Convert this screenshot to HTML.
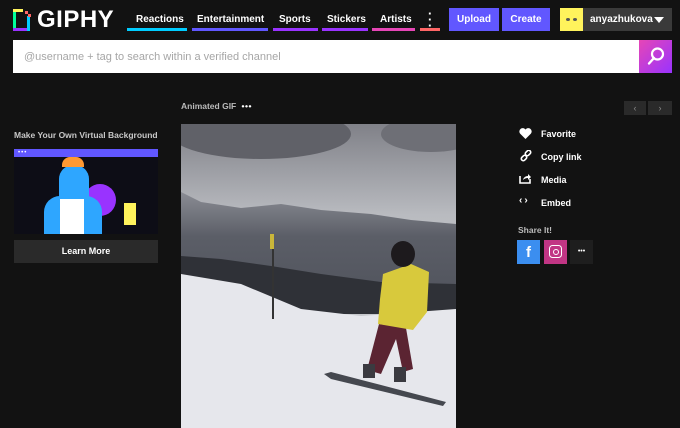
<!DOCTYPE html>
<html><head><meta charset="utf-8"><style>
*{margin:0;padding:0;box-sizing:border-box}
body{width:680px;height:428px;background:#121212;font-family:"Liberation Sans",sans-serif;color:#fff;position:relative;overflow:hidden}
.a{position:absolute}
.nav{font-size:10px;font-weight:bold;top:14px}
.ul{height:3px;top:28px}
.btn{top:8px;height:23px;background:#6157ff;font-size:10px;font-weight:bold;text-align:center;line-height:23px}
.act{left:541px;font-size:9px;font-weight:bold}
</style></head><body>
<!-- logo -->
<svg class="a" style="left:13px;top:9px" width="20" height="23" viewBox="0 0 20 23">
<rect x="0" y="2" width="3" height="19" fill="#00ff99"/><rect x="0" y="19" width="17" height="3" fill="#9933ff"/><rect x="14" y="7" width="3" height="15" fill="#00ccff"/><rect x="0" y="0" width="10" height="3" fill="#fff35c"/><rect x="12" y="2" width="3" height="3" fill="#ff6666"/><rect x="15" y="5" width="3" height="3" fill="#ff6666"/></svg>
<div class="a" style="left:37px;top:6px;font-size:24px;font-weight:bold;letter-spacing:0.5px">GIPHY</div>
<div class="a nav" style="left:136px">Reactions</div><div class="a ul" style="left:127px;width:60px;background:#00ccff"></div>
<div class="a nav" style="left:197px">Entertainment</div><div class="a ul" style="left:192px;width:76px;background:#6157ff"></div>
<div class="a nav" style="left:279px">Sports</div><div class="a ul" style="left:273px;width:45px;background:#9933ff"></div>
<div class="a nav" style="left:327px">Stickers</div><div class="a ul" style="left:322px;width:46px;background:#9933ff"></div>
<div class="a nav" style="left:380px">Artists</div><div class="a ul" style="left:372px;width:43px;background:#e646b6"></div>
<div class="a nav" style="left:428px;top:11px;font-size:13px;line-height:6px">·<br>·<br>·</div><div class="a ul" style="left:420px;width:20px;background:#ff6666"></div>
<div class="a btn" style="left:449px;width:50px">Upload</div>
<div class="a btn" style="left:502px;width:48px">Create</div>
<div class="a" style="left:560px;top:8px;width:112px;height:23px;background:#3a3a3a"></div>
<div class="a" style="left:560px;top:8px;width:23px;height:23px;background:#fff35c"></div>
<div class="a" style="left:566px;top:18px;width:4px;height:3px;background:#555;border-radius:50%"></div><div class="a" style="left:573px;top:18px;width:4px;height:3px;background:#555;border-radius:50%"></div>
<div class="a" style="left:590px;top:14px;font-size:10px;font-weight:bold">anyazhukova</div>
<div class="a" style="left:654px;top:17px;border:5px solid transparent;border-top:6px solid #fff;border-bottom:0"></div>
<!-- search -->
<div class="a" style="left:13px;top:40px;width:626px;height:33px;background:#fff"></div>
<div class="a" style="left:24px;top:51px;font-size:11px;color:#a6a6a6">@username + tag to search within a verified channel</div>
<div class="a" style="left:639px;top:40px;width:33px;height:33px;background:linear-gradient(135deg,#e646b6,#9933ff)"></div>
<svg class="a" style="left:645px;top:45px" width="22" height="22" viewBox="0 0 22 22"><circle cx="12.5" cy="9" r="5.5" fill="none" stroke="#fff" stroke-width="2.2"/><line x1="9" y1="13" x2="4" y2="18.5" stroke="#fff" stroke-width="2.4" stroke-linecap="round"/></svg>
<!-- left -->
<div class="a" style="left:14px;top:130px;font-size:8.5px;font-weight:bold;color:#c8c8c8">Make Your Own Virtual Background</div>
<div class="a" style="left:14px;top:149px;width:144px;height:85px;background:#0d0d16;overflow:hidden">
<div class="a" style="left:0;top:0;width:144px;height:8px;background:#6157ff"></div>
<div class="a" style="left:4px;top:3px;font-size:6px;line-height:2px;letter-spacing:1px">•••</div>
<div class="a" style="left:70px;top:35px;width:32px;height:32px;border-radius:50%;background:#9933ff"></div>
<div class="a" style="left:45px;top:16px;width:30px;height:60px;border-radius:14px 14px 4px 4px;background:#2ea6ff"></div>
<div class="a" style="left:30px;top:47px;width:58px;height:38px;border-radius:16px 16px 0 0;background:#2ea6ff"></div>
<div class="a" style="left:46px;top:50px;width:24px;height:35px;background:#fff"></div>
<div class="a" style="left:48px;top:8px;width:22px;height:10px;border-radius:8px 8px 0 0;background:#ff9933"></div>
<div class="a" style="left:110px;top:54px;width:12px;height:22px;background:#fff35c"></div>
</div>
<div class="a" style="left:14px;top:240px;width:144px;height:23px;background:#2a2a2a;font-size:9px;font-weight:bold;text-align:center;line-height:23px">Learn More</div>
<!-- center -->
<div class="a" style="left:181px;top:101px;font-size:8.5px;font-weight:bold;color:#bbb">Animated GIF <span style="color:#fff;letter-spacing:0.5px">&nbsp;•••</span></div>
<svg class="a" style="left:181px;top:124px" width="275" height="304" viewBox="0 0 275 304">
<defs><linearGradient id="sky" x1="0" y1="0" x2="0" y2="1"><stop offset="0" stop-color="#808188"/><stop offset=".3" stop-color="#b9bbc0"/><stop offset="1" stop-color="#d5d6da"/></linearGradient>
<linearGradient id="mt" x1="0" y1="0" x2="0" y2="1"><stop offset="0" stop-color="#8a8c94"/><stop offset=".4" stop-color="#5b5e67"/><stop offset="1" stop-color="#50535c"/></linearGradient></defs>
<rect width="275" height="304" fill="url(#sky)"/>
<ellipse cx="80" cy="10" rx="90" ry="25" fill="#606168"/>
<ellipse cx="250" cy="10" rx="50" ry="18" fill="#6e6f76"/>
<path d="M0 68 L20 78 L60 84 L100 80 L140 86 L190 90 L230 96 L275 100 L275 180 L0 180Z" fill="url(#mt)"/>
<path d="M0 132 L40 135 L90 142 L140 150 L200 158 L275 160 L275 190 L0 190Z" fill="#2f3137"/>
<path d="M0 150 L60 160 L120 185 L180 192 L275 185 L275 304 L0 304Z" fill="#e6e7ec"/>
<rect x="91" y="110" width="2" height="85" fill="#333"/><rect x="89" y="110" width="4" height="15" fill="#c9b63a"/>
<path d="M143 250 L150 255 L262 282 L265 278 L150 248Z" fill="#45484f"/>
<path d="M198 200 L225 204 L232 245 L222 248 L215 215 L200 250 L186 246Z" fill="#5b2432"/>
<rect x="182" y="240" width="12" height="14" fill="#3a3a40"/><rect x="213" y="243" width="12" height="15" fill="#3a3a40"/>
<path d="M202 150 L230 140 L248 148 L246 188 L232 206 L197 200 L199 175Z" fill="#d8c93c"/>
<ellipse cx="222" cy="130" rx="12" ry="13" fill="#1d1a1d"/>
</svg>
<!-- right -->
<div class="a" style="left:624px;top:101px;width:22px;height:14px;background:#2a2a2a;color:#888;font-size:9px;text-align:center;line-height:14px">‹</div>
<div class="a" style="left:648px;top:101px;width:24px;height:14px;background:#2a2a2a;color:#888;font-size:9px;text-align:center;line-height:14px">›</div>
<svg class="a" style="left:519px;top:128px" width="13" height="11" viewBox="0 0 13 11"><path d="M6.5 11 L1 5.5 A3 3 0 0 1 6.5 1.5 A3 3 0 0 1 12 5.5Z" fill="#fff"/></svg>
<div class="a act" style="top:129px">Favorite</div>
<svg class="a" style="left:520px;top:150px" width="12" height="12" viewBox="0 0 12 12"><g fill="none" stroke="#fff" stroke-width="1.6"><rect x="5" y="1" width="6" height="4" rx="2" transform="rotate(-45 8 3)"/><rect x="1" y="6" width="6" height="4" rx="2" transform="rotate(-45 4 8)"/></g></svg>
<div class="a act" style="top:152px">Copy link</div>
<svg class="a" style="left:519px;top:173px" width="13" height="11" viewBox="0 0 13 11"><path d="M1 3 V10 H11 V6" fill="none" stroke="#fff" stroke-width="1.6"/><path d="M4 7 Q5 3 9 3 V1 L12 4 L9 7 V5 Q6 5 4 7Z" fill="#fff"/></svg>
<div class="a act" style="top:175px">Media</div>
<div class="a" style="left:519px;top:195px;font-size:10px;font-weight:bold;letter-spacing:2px">‹›</div>
<div class="a act" style="top:198px">Embed</div>
<div class="a" style="left:518px;top:225px;font-size:8.5px;font-weight:bold;color:#bbb">Share It!</div>
<div class="a" style="left:517px;top:240px;width:23px;height:24px;background:#3b8ef0;font-size:15px;font-weight:bold;text-align:center;line-height:26px">f</div>
<div class="a" style="left:544px;top:240px;width:23px;height:24px;background:#c13584"></div>
<div class="a" style="left:549px;top:245px;width:13px;height:13px;border:1.6px solid #fff;border-radius:3.5px"></div>
<div class="a" style="left:552.5px;top:248.5px;width:6px;height:6px;border:1.5px solid #fff;border-radius:50%"></div>
<div class="a" style="left:570px;top:240px;width:23px;height:24px;background:#1e1e1e;font-size:7px;text-align:center;line-height:24px">•••</div>
</body></html>
